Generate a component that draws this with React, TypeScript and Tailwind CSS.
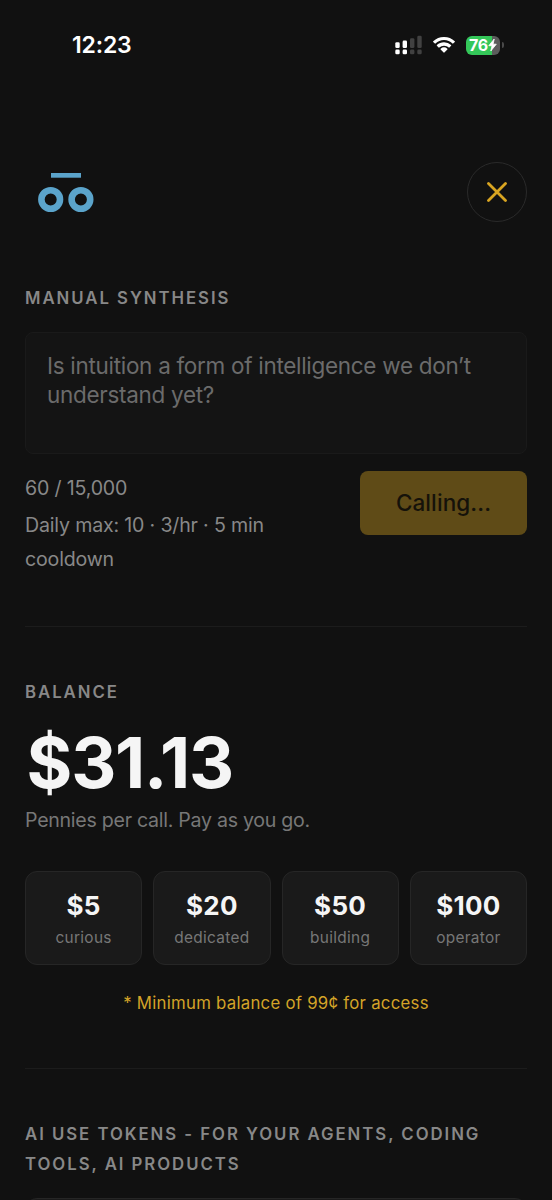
const TIERS = [
  { price: "$5", label: "curious" },
  { price: "$20", label: "dedicated" },
  { price: "$50", label: "building" },
  { price: "$100", label: "operator" },
];

function StatusBar() {
  return (
    <div className="flex h-[90px] items-center justify-between pl-[72px] pr-[48px]">
      <span className="text-[23px] font-semibold leading-none tracking-[-0.15px] text-white">
        12:23
      </span>
      <div className="flex items-center">
        <svg width="28" height="20" viewBox="0 0 28 20" fill="#fff">
          <rect x="0.3" y="7.2" width="4.4" height="5.8" rx="1.3" />
          <rect x="0.3" y="14.6" width="4.4" height="4.6" rx="1.3" />
          <rect x="7.6" y="5.6" width="4.4" height="7.4" rx="1.3" />
          <rect x="7.6" y="14.6" width="4.4" height="4.6" rx="1.3" />
          <g fill="#414141">
            <rect x="15" y="3.2" width="4.4" height="9.8" rx="1.3" />
            <rect x="15" y="14.6" width="4.4" height="4.6" rx="1.3" />
            <rect x="22.3" y="0.8" width="4.4" height="12.2" rx="1.3" />
            <rect x="22.3" y="14.6" width="4.4" height="4.6" rx="1.3" />
          </g>
        </svg>
        <svg className="ml-[9px]" width="24" height="18" viewBox="0 0 24 17" fill="#fff">
          <path d="M12 3.6c3.3 0 6.3 1.3 8.5 3.5.2.2.4.2.6 0l1.7-1.7c.2-.2.2-.5 0-.7A15.500 15.500 0 0 0 12 .4 15.500 15.500 0 0 0 1.200 4.700c-.2.2-.2.5 0 .7l1.700 1.700c.2.2.4.2.6 0A12.200 12.200 0 0 1 12 3.600z" />
          <path d="M12 9.200c1.800 0 3.400.7 4.700 1.800.2.2.5.2.7 0l1.700-1.700c.2-.2.2-.5 0-.7A10.400 10.400 0 0 0 12 5.800c-2.700 0-5.200 1-7.100 2.800-.2.2-.2.5 0 .7l1.700 1.700c.2.2.5.2.7 0A7 7 0 0 1 12 9.200z" />
          <path d="M15.400 13c.2-.2.2-.5 0-.7a5.200 5.200 0 0 0-6.800 0c-.2.2-.2.5 0 .7l3 3.100c.2.2.6.2.8 0z" />
        </svg>
        <div className="ml-[10px] flex items-center gap-[2px]">
          <div className="flex h-[19px] w-[34px] items-center justify-center overflow-hidden rounded-[6px] bg-[linear-gradient(to_right,#34c759_76%,#5c5c5c_76%)]">
            <span className="text-[16px] font-bold leading-none tracking-[-0.3px] text-white">
              76
            </span>
            <svg width="9" height="14" viewBox="0 0 9 14" fill="#fff" stroke="#fff" strokeWidth="0.8" strokeLinejoin="round">
              <path d="M6.200 1 .8 7.700h3.200L2.800 13 8.300 6.200H5.100z" />
            </svg>
          </div>
          <div className="h-[6px] w-[2px] rounded-r-full bg-[#4a4a4a]" />
        </div>
      </div>
    </div>
  );
}

function Logo() {
  return (
    <svg className="ml-[12px]" width="58" height="42" viewBox="0 0 58 42" fill="none">
      <rect x="14" y="2" width="30" height="4.700" fill="#5ba4cb" />
      <circle cx="13.700" cy="28.500" r="9.300" stroke="#5ba4cb" strokeWidth="6.600" />
      <circle cx="43.900" cy="28.500" r="9.300" stroke="#5ba4cb" strokeWidth="6.600" />
    </svg>
  );
}

function SectionTitle({ children }: { children: string }) {
  return (
    <h2 className="text-[16.8px] font-semibold uppercase leading-[30px] tracking-[1.95px] text-[#888888]">
      {children}
    </h2>
  );
}

export default function App() {
  return (
    <div className="h-[1200px] overflow-hidden bg-[#111111] font-['Inter',sans-serif]">
      <StatusBar />

      <main className="px-[25px]">
        <header className="mt-[72px] flex h-[60px] items-center justify-between">
          <Logo />
          <button
            type="button"
            aria-label="Close"
            className="flex size-[60px] items-center justify-center rounded-full border border-[#2a2a2a]"
          >
            <svg width="20" height="20" viewBox="0 0 20 20" stroke="#d9a521" strokeWidth="2.800" strokeLinecap="round">
              <path d="M1.500 1.500 18.500 18.500M18.500 1.500 1.500 18.500" />
            </svg>
          </button>
        </header>

        <section className="mt-[61px]">
          <SectionTitle>Manual Synthesis</SectionTitle>
          <div className="mt-[19px] h-[122px] rounded-[8px] border border-[#1a1a1a] bg-[#141414] px-[21px] pt-[18px] text-[22.5px] leading-[29px] tracking-[-0.3px] text-[#6b6b6b]">
            Is intuition a form of intelligence we don’t understand yet?
          </div>
          <div className="mt-[17px] flex items-start justify-between">
            <div className="w-[270px] text-[19.6px] tracking-[-0.18px] text-[#888888]">
              <p className="leading-[34px]">60 / 15,000</p>
              <p className="mt-[3px] leading-[34px]">Daily max: 10 · 3/hr · 5 min cooldown</p>
            </div>
            <button
              type="button"
              disabled
              className="h-[64px] w-[167px] rounded-[8px] bg-[#5f4b17] text-[22.5px] font-medium tracking-[0.1px] text-[#15120a]"
            >
              Calling...
            </button>
          </div>
        </section>

        <section className="mt-[50px] border-t border-[#1c1c1c] pt-[50px]">
          <SectionTitle>Balance</SectionTitle>
          <p className="ml-[1.500px] mt-[18px] text-[70px] font-bold leading-[76px] tracking-[-1.2px] text-[#f5f5f5]">
            $31.13
          </p>
          <p className="mt-[2px] text-[19.6px] leading-[34px] tracking-[-0.28px] text-[#777777]">
            Pennies per call. Pay as you go.
          </p>
          <div className="mt-[34px] grid grid-cols-4 gap-[11px]">
            {TIERS.map((tier) => (
              <button
                key={tier.label}
                type="button"
                className="flex h-[94px] flex-col items-center rounded-[12px] border border-[#262626] bg-[#1a1a1a] pt-[18px]"
              >
                <span className="text-[26px] font-bold leading-[32px] tracking-[0.3px] text-[#f5f5f5]">
                  {tier.price}
                </span>
                <span className="mt-[4px] text-[15.4px] leading-[24px] tracking-[0.3px] text-[#777777]">
                  {tier.label}
                </span>
              </button>
            ))}
          </div>
          <p className="mt-[23px] text-center text-[16.8px] leading-[30px] tracking-[0.25px] text-[#d4a428]">
            * Minimum balance of 99¢ for access
          </p>
        </section>

        <section className="mt-[50px] border-t border-[#1c1c1c] pt-[50px]">
          <SectionTitle>AI Use Tokens - For your agents, coding tools, AI products</SectionTitle>
          <div className="mt-[19px] h-[122px] rounded-[12px] border border-[#262626] bg-[#1a1a1a]" />
        </section>
      </main>
    </div>
  );
}
